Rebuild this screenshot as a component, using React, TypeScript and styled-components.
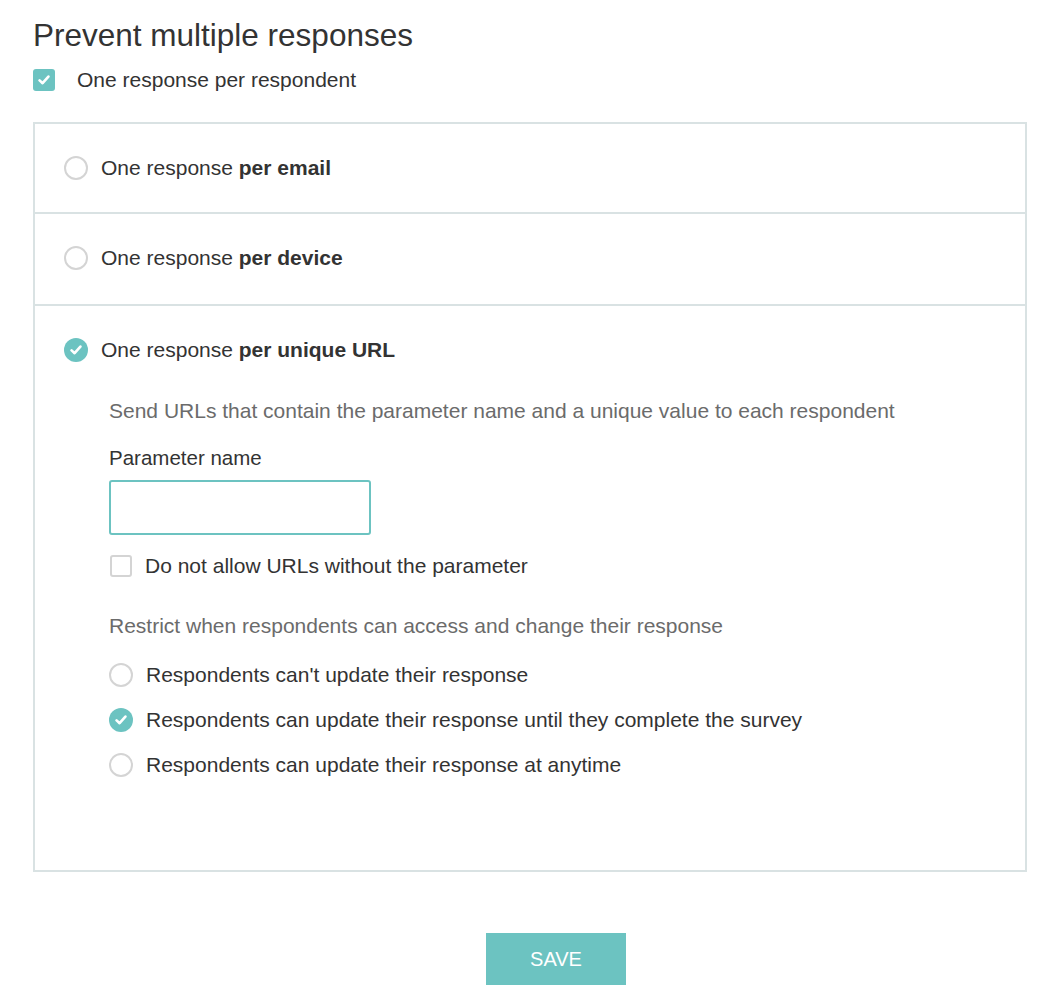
import React from "react";
import styled, { createGlobalStyle } from "styled-components";

const Global = createGlobalStyle`
  html, body { margin: 0; padding: 0; background: #fff; }
  body { font-family: "Liberation Sans", Arial, sans-serif; color: #333; }
`;

const TEAL = "#6cc3c1";

const Page = styled.div`
  padding: 16px 35px 24px 33px;
  display: flex;
  flex-direction: column;
`;

const Title = styled.h1`
  margin: 0;
  font-size: 31.5px;
  font-weight: 400;
  line-height: 38px;
  color: #333;
`;

const TopCheckRow = styled.label`
  display: flex;
  align-items: center;
  gap: 22px;
  margin-top: 13px;
  height: 26px;
  font-size: 21px;
  color: #333;
`;

const Box = styled.div<{ $checked: boolean }>`
  width: 22px;
  height: 22px;
  box-sizing: border-box;
  border-radius: 3px;
  flex: none;
  display: flex;
  align-items: center;
  justify-content: center;
  background: ${(p) => (p.$checked ? TEAL : "#fff")};
  border: ${(p) => (p.$checked ? "none" : "2px solid #d4d4d4")};
`;

const Circle = styled.div<{ $checked: boolean }>`
  width: 24px;
  height: 24px;
  box-sizing: border-box;
  border-radius: 50%;
  flex: none;
  display: flex;
  align-items: center;
  justify-content: center;
  background: ${(p) => (p.$checked ? TEAL : "#fff")};
  border: ${(p) => (p.$checked ? "none" : "2px solid #d4d4d4")};
`;

const Tick = () => (
  <svg width="12" height="10" viewBox="0 0 12 10">
    <path d="M1.6 5.4 L4.6 8.2 L10.4 1.6" fill="none" stroke="#fff" strokeWidth="2.6" strokeLinecap="round" strokeLinejoin="round" />
  </svg>
);

const Check = ({ checked }: { checked: boolean }) => (
  <Box $checked={checked}>{checked && <Tick />}</Box>
);
const Radio = ({ checked }: { checked: boolean }) => (
  <Circle $checked={checked}>{checked && <Tick />}</Circle>
);

const Panel = styled.div`
  margin-top: 29px;
  border: 2px solid #d9e2e3;
  display: flex;
  flex-direction: column;
`;

const Section = styled.div<{ $h: number }>`
  padding: 32px 29px 0 29px;
  height: ${(p) => p.$h}px;
  box-sizing: border-box;
  & + & { border-top: 2px solid #d9e2e3; }
`;

const OptionRow = styled.label`
  display: flex;
  align-items: center;
  gap: 13px;
  font-size: 21px;
  line-height: 24px;
  color: #333;
  b { font-weight: 700; }
`;

const Details = styled.div`
  padding: 37px 0 0 45px;
  display: flex;
  flex-direction: column;
`;

const Hint = styled.div<{ $top?: number }>`
  margin-top: ${(p) => p.$top ?? 0}px;
  font-size: 21px;
  line-height: 24px;
  color: #6b6b6b;
`;

const FieldLabel = styled.div`
  margin-top: 23px;
  font-size: 20.5px;
  line-height: 24px;
  color: #333;
`;

const Input = styled.input`
  margin-top: 10px;
  width: 262px;
  height: 55px;
  box-sizing: border-box;
  border: 2px solid ${TEAL};
  border-radius: 3px;
  outline: none;
  font-size: 18px;
  padding: 0 12px;
`;

const SmallRow = styled.label<{ $top: number }>`
  display: flex;
  align-items: center;
  gap: 13px;
  margin-top: ${(p) => p.$top}px;
  font-size: 21px;
  line-height: 24px;
  color: #333;
`;

const Footer = styled.div`
  display: flex;
  justify-content: center;
  padding-left: 52px;
  margin-top: 61px;
`;

const SaveButton = styled.button`
  width: 140px;
  height: 52px;
  border: none;
  background: ${TEAL};
  color: #fff;
  font-family: "Liberation Sans", Arial, sans-serif;
  font-size: 20px;
  cursor: pointer;
`;

const SmallCheckOffset = styled.div`
  margin-left: 1px;
  display: flex;
`;

export default function App() {
  return (
    <>
      <Global />
      <Page>
        <Title>Prevent multiple responses</Title>
        <TopCheckRow>
          <Check checked />
          One response per respondent
        </TopCheckRow>
        <Panel>
          <Section $h={88}>
            <OptionRow>
              <Radio checked={false} />
              <span>One response <b>per email</b></span>
            </OptionRow>
          </Section>
          <Section $h={92}>
            <OptionRow>
              <Radio checked={false} />
              <span>One response <b>per device</b></span>
            </OptionRow>
          </Section>
          <Section $h={566}>
            <OptionRow>
              <Radio checked />
              <span>One response <b>per unique URL</b></span>
            </OptionRow>
            <Details>
              <Hint>Send URLs that contain the parameter name and a unique value to each respondent</Hint>
              <FieldLabel>Parameter name</FieldLabel>
              <Input type="text" />
              <SmallRow $top={19}>
                <SmallCheckOffset><Check checked={false} /></SmallCheckOffset>
                Do not allow URLs without the parameter
              </SmallRow>
              <Hint $top={36}>Restrict when respondents can access and change their response</Hint>
              <SmallRow $top={25}>
                <Radio checked={false} />
                Respondents can't update their response
              </SmallRow>
              <SmallRow $top={21}>
                <Radio checked />
                Respondents can update their response until they complete the survey
              </SmallRow>
              <SmallRow $top={21}>
                <Radio checked={false} />
                Respondents can update their response at anytime
              </SmallRow>
            </Details>
          </Section>
        </Panel>
        <Footer>
          <SaveButton>SAVE</SaveButton>
        </Footer>
      </Page>
    </>
  );
}
